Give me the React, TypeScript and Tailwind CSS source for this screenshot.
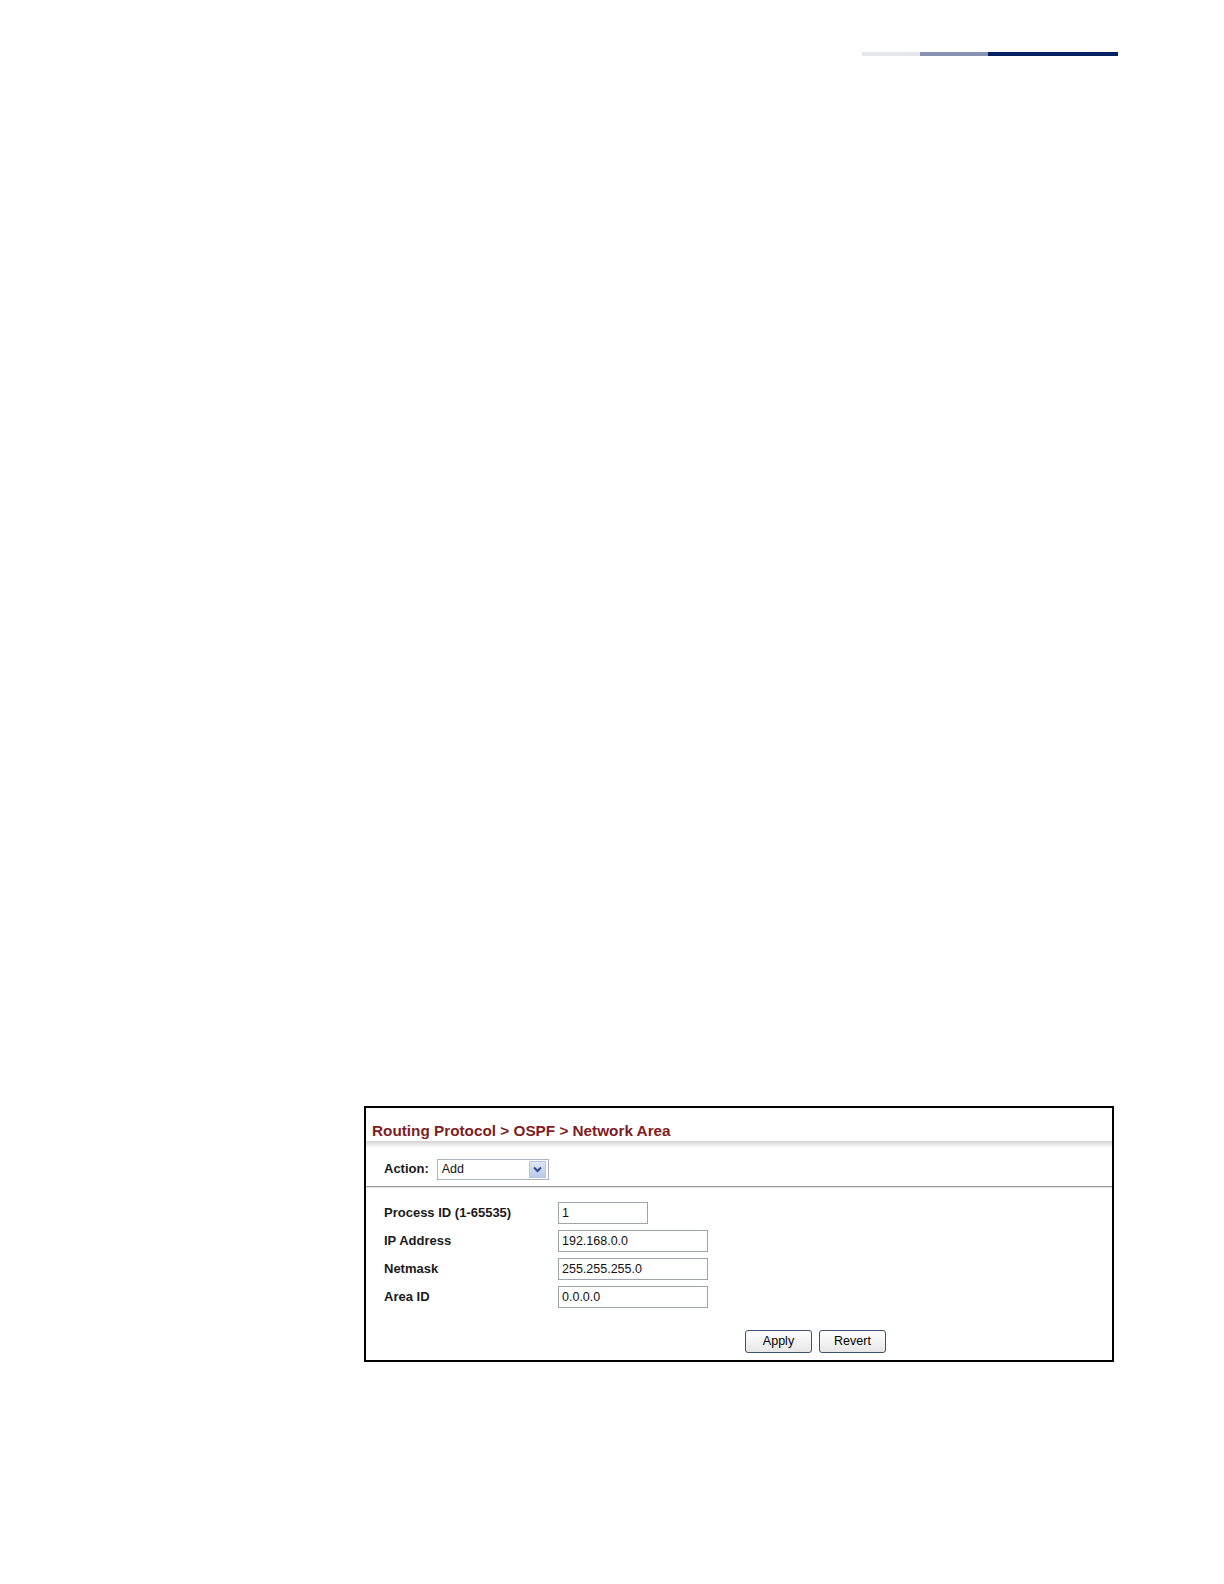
import React from 'react'

const font = { fontFamily: '"Liberation Sans", Arial, sans-serif' }

const fields = [
  { label: 'Process ID (1-65535)', value: '1', width: 'w-[90px]' },
  { label: 'IP Address', value: '192.168.0.0', width: 'w-[150px]' },
  { label: 'Netmask', value: '255.255.255.0', width: 'w-[150px]' },
  { label: 'Area ID', value: '0.0.0.0', width: 'w-[150px]' },
]

function HeaderRule() {
  return (
    <div className="flex h-[4px] ml-[862px] w-[256px]">
      <div className="w-[58px] bg-[#e6e7ea]" />
      <div className="w-[68px] bg-[#8791b1]" />
      <div className="flex-1 bg-[#03225f]" />
    </div>
  )
}

function SelectBox() {
  return (
    <div className="flex items-center w-[112px] h-[21px] border border-[#a9b3c2] bg-white pl-[4px] pr-[2px]">
      <span className="flex-1 text-[12.5px] text-[#111] leading-none">Add</span>
      <div className="flex items-center justify-center w-[17px] h-[17px] border border-[#b7c6e4] bg-gradient-to-b from-[#dfe7f7] to-[#b9c9ea]">
        <svg width="9" height="7" viewBox="0 0 9 7">
          <path d="M1 1.5 L4.5 5 L8 1.5" fill="none" stroke="#2c4a8a" strokeWidth="2" />
        </svg>
      </div>
    </div>
  )
}

function Button({ children }: { children: React.ReactNode }) {
  return (
    <button
      type="button"
      className="w-[67px] h-[23px] rounded-[3px] border border-[#3c5470] bg-gradient-to-b from-white to-[#e6e6e6] text-[12.5px] text-black leading-none"
    >
      {children}
    </button>
  )
}

export default function App() {
  return (
    <div className="w-[1224px] h-[1584px] bg-white" style={font}>
      <div className="pt-[52px]">
        <HeaderRule />
      </div>

      {/* panel */}
      <div className="mt-[1050px] ml-[364px] w-[750px] h-[256px] border-2 border-black bg-white">
        <div className="pt-[13px] pl-[6px] h-[33px]">
          <div className="text-[15.3px] leading-[20px] font-bold text-[#7f1c24]">
            Routing Protocol &gt; OSPF &gt; Network Area
          </div>
        </div>
        <div className="h-[7px] bg-gradient-to-b from-[#d2d2d2] to-white" />

        <div className="flex items-center h-[38px] pt-[4px] pl-[18px] gap-[8px]">
          <span className="text-[13px] font-bold text-[#1a1a1a]">Action:</span>
          <SelectBox />
        </div>
        <div className="h-px bg-[#9a9a9a]" />
        <div className="h-px bg-[#e4e4e4]" />

        <div className="flex flex-col gap-[6px] pt-[14px] pl-[18px]">
          {fields.map((f) => (
            <div key={f.label} className="flex items-center h-[22px]">
              <span className="w-[174px] text-[13px] font-bold text-[#1a1a1a]">{f.label}</span>
              <div className={`${f.width} h-[22px] flex items-center border border-[#9ea4ad] bg-white pl-[3px]`}>
                <span className="text-[12.5px] text-[#111] leading-none">{f.value}</span>
              </div>
            </div>
          ))}
        </div>

        <div className="flex gap-[7px] pl-[379px] pt-[22px]">
          <Button>Apply</Button>
          <Button>Revert</Button>
        </div>
      </div>
    </div>
  )
}
